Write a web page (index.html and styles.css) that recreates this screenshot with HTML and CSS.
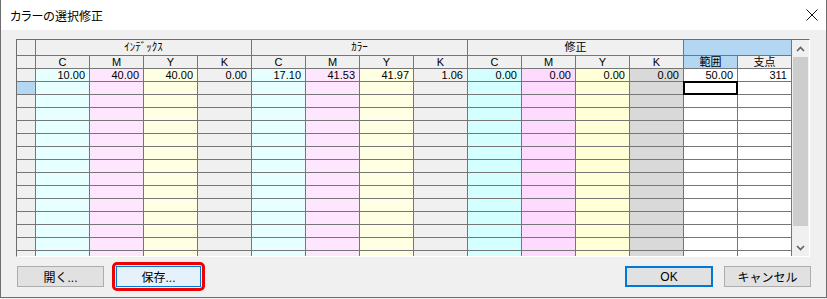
FILE: index.html
```html
<!DOCTYPE html>
<html lang="ja">

<head>
    <meta charset="UTF-8">
    <title>カラーの選択修正</title>
    <link rel="stylesheet" href="styles.css">
</head>

<body>
    <div class="dialog">
        <div class="titlebar">
            <span class="title">カラーの選択修正</span>
            <svg class="close" width="12" height="12" viewBox="0 0 12 12">
                <path d="M0.5 0.5L11.5 11.5M11.5 0.5L0.5 11.5" stroke="#111" stroke-width="1" fill="none" />
            </svg>
        </div>
        <div class="content">
            <div class="frame">
                <div class="sheet" id="sheet">
                    <!-- 見出し1段目 -->
                    <div class="rh"></div>
                    <div class="grp">ｲﾝﾃﾞｯｸｽ</div>
                    <div class="grp">ｶﾗｰ</div>
                    <div class="grp">修正</div>
                    <div class="grp-sm blue"></div>
                    <!-- 見出し2段目 -->
                    <div class="rh"></div>
                    <div class="hd">C</div>
                    <div class="hd">M</div>
                    <div class="hd">Y</div>
                    <div class="hd">K</div>
                    <div class="hd">C</div>
                    <div class="hd">M</div>
                    <div class="hd">Y</div>
                    <div class="hd">K</div>
                    <div class="hd">C</div>
                    <div class="hd">M</div>
                    <div class="hd">Y</div>
                    <div class="hd">K</div>
                    <div class="hd blue">範囲</div>
                    <div class="hd">支点</div>
                    <!-- データ -->
                    <div class="rh"></div>
                    <div class="c">10.00</div>
                    <div class="m">40.00</div>
                    <div class="y">40.00</div>
                    <div class="k">0.00</div>
                    <div class="c">17.10</div>
                    <div class="m">41.53</div>
                    <div class="y">41.97</div>
                    <div class="k">1.06</div>
                    <div class="c2">0.00</div>
                    <div class="m2">0.00</div>
                    <div class="y2">0.00</div>
                    <div class="k2">0.00</div>
                    <div class="w">50.00</div>
                    <div class="w">311</div>
                </div>
                <div class="vscroll">
                    <div class="arrow">
                        <svg width="9" height="6" viewBox="0 0 9 6"><path d="M1 5L4.5 1.5L8 5" stroke="#606060" stroke-width="1.6" fill="none" /></svg>
                    </div>
                    <div class="track">
                        <div class="thumb"></div>
                    </div>
                    <div class="arrow">
                        <svg width="9" height="6" viewBox="0 0 9 6"><path d="M1 1L4.5 4.5L8 1" stroke="#606060" stroke-width="1.6" fill="none" /></svg>
                    </div>
                </div>
            </div>
            <div class="buttons">
                <button class="btn open">開く...</button>
                <span class="mark"><button class="btn hover">保存...</button></span>
                <button class="btn default">OK</button>
                <button class="btn">キャンセル</button>
            </div>
        </div>
    </div>

    <script>
        //空の行を作る
        let sheet = document.getElementById('sheet'),
            cols = ['c', 'm', 'y', 'k', 'c', 'm', 'y', 'k', 'c2', 'm2', 'y2', 'k2', 'w', 'w'];

        for (let r = 0; r < 14; r++) {
            let rh = document.createElement('div');
            rh.className = r == 0 ? 'rh sel' : 'rh';
            sheet.appendChild(rh);
            for (let i = 0; i < cols.length; i++) {
                let cell = document.createElement('div');
                cell.className = cols[i];
                //範囲の選択セル
                if (r == 0 && i == 12) cell.className += ' focus';
                sheet.appendChild(cell);
            }
        }
    </script>
</body>

</html>
```

FILE: styles.css
```css
body {
    margin: 0;
    padding: 0;
    background: #f0f0f0;
}

.dialog {
    width: 827px;
    height: 298px;
    box-sizing: border-box;
    border: 1px solid #6d6d6d;
    border-top: none;
    background: #f0f0f0;
    font-family: "Noto Sans CJK JP", sans-serif;
}

.titlebar {
    height: 30px;
    background: #fff;
    display: flex;
    align-items: center;
    justify-content: space-between;
    padding: 0 8px 0 9px;
}

.title {
    font-size: 12px;
    color: #000;
    font-feature-settings: "palt";
}

.close {
    display: block;
}

.content {
    padding: 9px 15px 0 15px;
}

.frame {
    width: 794px;
    height: 218px;
    box-sizing: border-box;
    border: 1px solid;
    border-color: #6d6d6d #fff #fff #6d6d6d;
    display: flex;
    overflow: hidden;
}

.sheet {
    display: grid;
    grid-template-columns: 18px repeat(14, 53px);
    grid-template-rows: 15px;
    grid-auto-rows: 12px;
    gap: 1px;
    background: #767676;
    border-right: 1px solid #767676;
    align-self: flex-start;
    font-family: "Liberation Sans", "Noto Sans CJK JP", sans-serif;
    font-size: 11px;
    line-height: 12px;
    color: #000;
}

.sheet>div {
    overflow: hidden;
    white-space: nowrap;
    text-align: right;
    padding-right: 4px;
}

.rh,
.hd,
.grp,
.grp-sm {
    background: #f0f0f0;
}

.sheet>.hd,
.sheet>.grp,
.sheet>.grp-sm {
    text-align: center;
    padding-right: 0;
}

.grp {
    grid-column: span 4;
    line-height: 15px;
}

.grp-sm {
    grid-column: span 2;
}

.blue,
.rh.sel {
    background: #b3d7f3;
}

.c {
    background: #e6ffff;
}

.m {
    background: #fee6fe;
}

.y {
    background: #ffffe4;
}

.k {
    background: #f0f0f0;
}

.c2 {
    background: #d4ffff;
}

.m2 {
    background: #ffdaff;
}

.y2 {
    background: #ffffd8;
}

.k2 {
    background: #d9d9d9;
}

.w {
    background: #fff;
}

.focus {
    outline: 2px solid #000;
    outline-offset: -1px;
}

.vscroll {
    width: 17px;
    flex: none;
    display: flex;
    flex-direction: column;
    background: #f0f0f0;
}

.arrow {
    height: 17px;
    display: flex;
    align-items: center;
    justify-content: center;
}

.track {
    flex: 1;
}

.thumb {
    height: 169px;
    margin: 0 1px;
    background: #cdcdcd;
}

.buttons {
    display: flex;
    align-items: center;
    margin-top: 5px;
    height: 29px;
}

.btn {
    height: 21px;
    box-sizing: border-box;
    border: 1px solid #adadad;
    background: #e1e1e1;
    font-family: "Liberation Sans", "Noto Sans CJK JP", sans-serif;
    font-size: 12px;
    color: #000;
    padding: 0;
    width: 87px;
}

.btn.open {
    margin-left: 1px;
    margin-right: 8px;
}

.mark {
    display: block;
    border: 3px solid #f00000;
    border-radius: 5px;
    padding: 1px;
}

.mark .btn {
    display: block;
    width: 85px;
}

.btn.hover {
    background: #e5f1fb;
    border-color: #0078d7;
}

.btn.default {
    border: 2px solid #0078d7;
    width: 88px;
    margin-left: auto;
    margin-right: 11px;
}
```
